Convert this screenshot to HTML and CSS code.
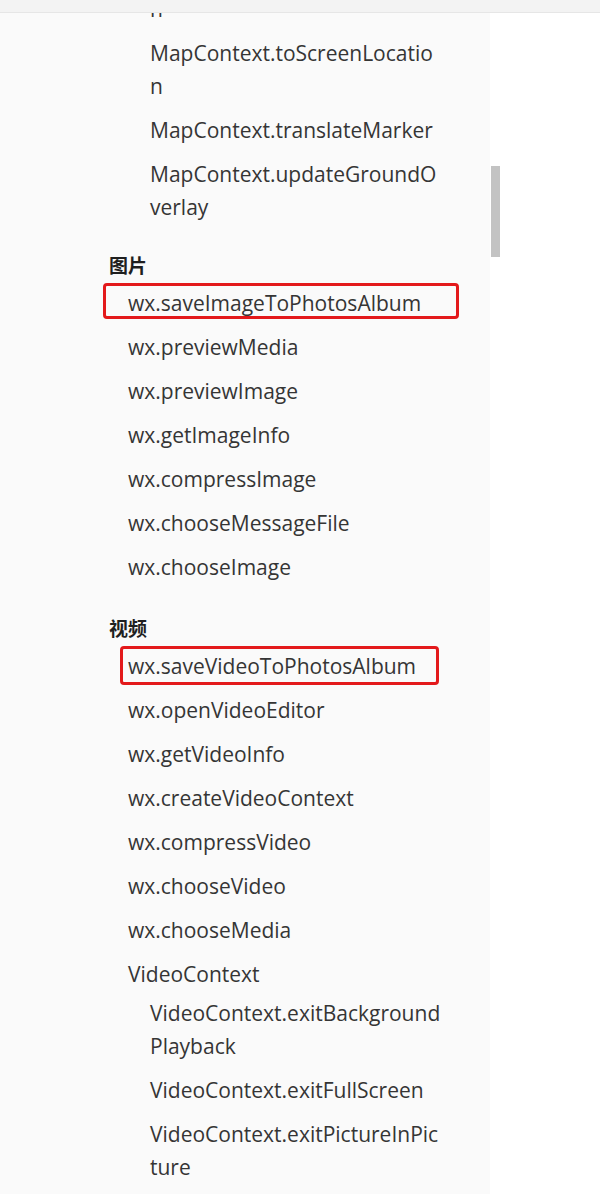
FILE: index.html
```html
<!DOCTYPE html>
<html lang="zh-CN">
<head>
<meta charset="utf-8">
<title>API 目录</title>
<link rel="stylesheet" href="styles.css">
</head>
<body>
<div class="topbar"></div>
<div class="main">
  <nav class="sidebar">
    <div class="scroll">
      <ul class="list level2">
        <li class="item">MapContext.setLocMarkerIcon</li>
        <li class="item">MapContext.toScreenLocation</li>
        <li class="item">MapContext.translateMarker</li>
        <li class="item">MapContext.updateGroundOverlay</li>
      </ul>

      <section class="group">
        <h3 class="group-title">图片</h3>
        <ul class="list level1">
          <li class="item marked marked-img">wx.saveImageToPhotosAlbum</li>
          <li class="item">wx.previewMedia</li>
          <li class="item">wx.previewImage</li>
          <li class="item">wx.getImageInfo</li>
          <li class="item">wx.compressImage</li>
          <li class="item">wx.chooseMessageFile</li>
          <li class="item">wx.chooseImage</li>
        </ul>
      </section>

      <section class="group">
        <h3 class="group-title">视频</h3>
        <ul class="list level1">
          <li class="item marked marked-video">wx.saveVideoToPhotosAlbum</li>
          <li class="item">wx.openVideoEditor</li>
          <li class="item">wx.getVideoInfo</li>
          <li class="item">wx.createVideoContext</li>
          <li class="item">wx.compressVideo</li>
          <li class="item">wx.chooseVideo</li>
          <li class="item">wx.chooseMedia</li>
          <li class="item parent">VideoContext
            <ul class="list level2 nested">
              <li class="item">VideoContext.exitBackgroundPlayback</li>
              <li class="item">VideoContext.exitFullScreen</li>
              <li class="item">VideoContext.exitPictureInPicture</li>
            </ul>
          </li>
        </ul>
      </section>
    </div>
  </nav>
  <div class="scrollbar"><div class="thumb"></div></div>
  <div class="content"></div>
</div>
</body>
</html>
```

FILE: styles.css
```css
*, *::before, *::after { box-sizing: border-box; }

html, body {
  margin: 0;
  padding: 0;
  height: 100%;
  background: #ffffff;
  font-family: "Open Sans", "Noto Sans CJK SC", sans-serif;
  color: #333333;
  overflow: hidden;
}

.topbar {
  height: 13px;
  background: #f3f3f3;
  border-bottom: 1px solid #e6e6e6;
}

.main {
  display: flex;
  height: calc(100% - 13px);
  overflow: hidden;
}

.sidebar {
  width: 490px;
  flex: none;
  background: #fafafa;
  overflow: hidden;
}

.scroll {
  margin-top: -58px;
}

.list {
  list-style: none;
  margin: 0;
  padding: 0;
}

.item {
  font-size: 21px;
  line-height: 33px;
  padding: 5px 0 6px;
  word-break: break-all;
  color: #353535;
}

.level1 > .item {
  padding-left: 128px;
  padding-right: 47px;
}

.level2 {
  padding-left: 150px;
  padding-right: 47px;
}

.level1 .level2 {
  padding-left: 22px;
  padding-right: 0;
}

.nested {
  margin-top: 1px;
}

.parent {
  padding-bottom: 0;
}

.group {
  margin-top: 23px;
}

.group + .group {
  margin-top: 26px;
}

.group-title {
  margin: 0 0 5px;
  padding-left: 109px;
  font-family: "Noto Sans CJK SC", sans-serif;
  font-weight: 700;
  font-size: 19px;
  line-height: 24px;
  color: #1f1f1f;
}

.marked {
  position: relative;
}

.marked::after {
  content: "";
  position: absolute;
  border: 3px solid #e3191b;
  border-radius: 4px;
}

.marked-img::after {
  left: 103px;
  width: 356px;
  top: 1px;
  height: 36px;
}

.marked-video::after {
  left: 120px;
  width: 319px;
  top: 1px;
  height: 39px;
}

.scrollbar {
  width: 11px;
  flex: none;
  background: #ffffff;
  padding: 153px 1px 0 1px;
}

.thumb {
  width: 9px;
  height: 91px;
  background: #c3c3c3;
}

.content {
  flex: 1;
  background: #ffffff;
}
```
